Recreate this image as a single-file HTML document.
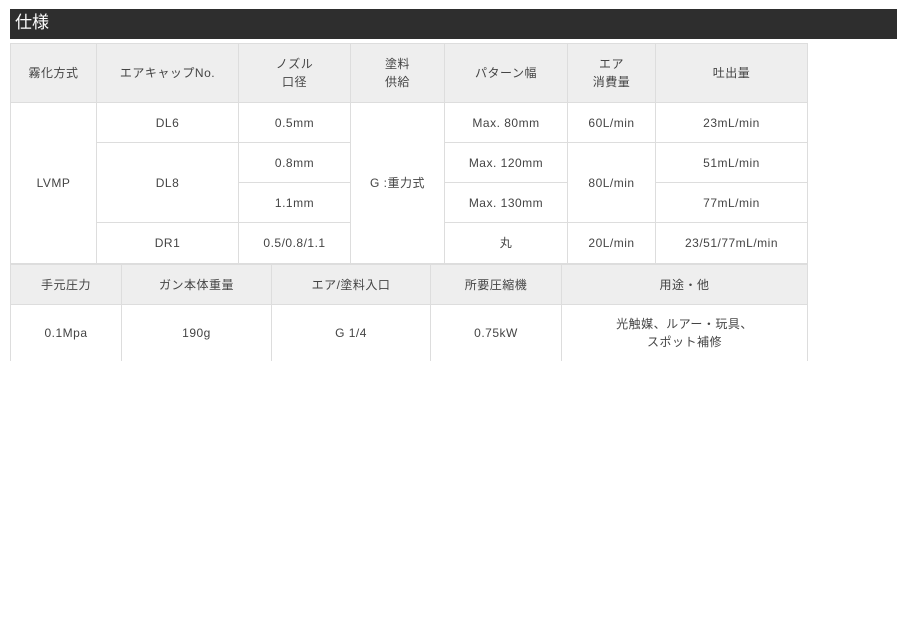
<!DOCTYPE html>
<html><head><meta charset="utf-8"><style>
body{margin:0;background:#fff;width:905px;height:620px;position:relative;font-family:"Liberation Sans","Noto Sans CJK JP",sans-serif;color:#444;font-size:12px;letter-spacing:0.5px;overflow:hidden}
.t{position:absolute;left:10px;top:9px;width:887px;height:30px;background:#2e2e2e;color:#fff;font-size:17px;line-height:27px;box-sizing:border-box;padding-left:5px;letter-spacing:0}
.c{position:absolute;box-sizing:border-box;border-left:1px solid #ddd;border-top:1px solid #ddd;display:flex;align-items:center;justify-content:center;text-align:center;line-height:18px}
.h{background:#eee}
</style></head><body>
<div class="t">仕様</div>
<div class="c h" style="left:10px;top:43px;width:86px;height:59px">霧化方式</div>
<div class="c h" style="left:96px;top:43px;width:142px;height:59px">エアキャップNo.</div>
<div class="c h" style="left:238px;top:43px;width:112px;height:59px">ノズル<br>口径</div>
<div class="c h" style="left:350px;top:43px;width:94px;height:59px">塗料<br>供給</div>
<div class="c h" style="left:444px;top:43px;width:123px;height:59px">パターン幅</div>
<div class="c h" style="left:567px;top:43px;width:88px;height:59px">エア<br>消費量</div>
<div class="c h" style="left:655px;top:43px;width:153px;height:59px;border-right:1px solid #ddd">吐出量</div>
<div class="c" style="left:10px;top:102px;width:86px;height:161px">LVMP</div>
<div class="c" style="left:96px;top:102px;width:142px;height:40px">DL6</div>
<div class="c" style="left:96px;top:142px;width:142px;height:80px">DL8</div>
<div class="c" style="left:96px;top:222px;width:142px;height:41px">DR1</div>
<div class="c" style="left:238px;top:102px;width:112px;height:40px">0.5mm</div>
<div class="c" style="left:238px;top:142px;width:112px;height:40px">0.8mm</div>
<div class="c" style="left:238px;top:182px;width:112px;height:40px">1.1mm</div>
<div class="c" style="left:238px;top:222px;width:112px;height:41px">0.5/0.8/1.1</div>
<div class="c" style="left:350px;top:102px;width:94px;height:161px">G :重力式</div>
<div class="c" style="left:444px;top:102px;width:123px;height:40px">Max. 80mm</div>
<div class="c" style="left:444px;top:142px;width:123px;height:40px">Max. 120mm</div>
<div class="c" style="left:444px;top:182px;width:123px;height:40px">Max. 130mm</div>
<div class="c" style="left:444px;top:222px;width:123px;height:41px">丸</div>
<div class="c" style="left:567px;top:102px;width:88px;height:40px">60L/min</div>
<div class="c" style="left:567px;top:142px;width:88px;height:80px">80L/min</div>
<div class="c" style="left:567px;top:222px;width:88px;height:41px">20L/min</div>
<div class="c" style="left:655px;top:102px;width:153px;height:40px;border-right:1px solid #ddd">23mL/min</div>
<div class="c" style="left:655px;top:142px;width:153px;height:40px;border-right:1px solid #ddd">51mL/min</div>
<div class="c" style="left:655px;top:182px;width:153px;height:40px;border-right:1px solid #ddd">77mL/min</div>
<div class="c" style="left:655px;top:222px;width:153px;height:41px;border-right:1px solid #ddd">23/51/77mL/min</div>
<div class="c h" style="left:10px;top:263px;width:111px;height:41px;border-top:2px solid #ddd">手元圧力</div>
<div class="c h" style="left:121px;top:263px;width:150px;height:41px;border-top:2px solid #ddd">ガン本体重量</div>
<div class="c h" style="left:271px;top:263px;width:159px;height:41px;border-top:2px solid #ddd">エア/塗料入口</div>
<div class="c h" style="left:430px;top:263px;width:131px;height:41px;border-top:2px solid #ddd">所要圧縮機</div>
<div class="c h" style="left:561px;top:263px;width:247px;height:41px;border-top:2px solid #ddd;border-right:1px solid #ddd">用途・他</div>
<div class="c" style="left:10px;top:304px;width:111px;height:57px">0.1Mpa</div>
<div class="c" style="left:121px;top:304px;width:150px;height:57px">190g</div>
<div class="c" style="left:271px;top:304px;width:159px;height:57px">G 1/4</div>
<div class="c" style="left:430px;top:304px;width:131px;height:57px">0.75kW</div>
<div class="c" style="left:561px;top:304px;width:247px;height:57px;border-right:1px solid #ddd">光触媒、ルアー・玩具、<br>スポット補修</div>
</body></html>
